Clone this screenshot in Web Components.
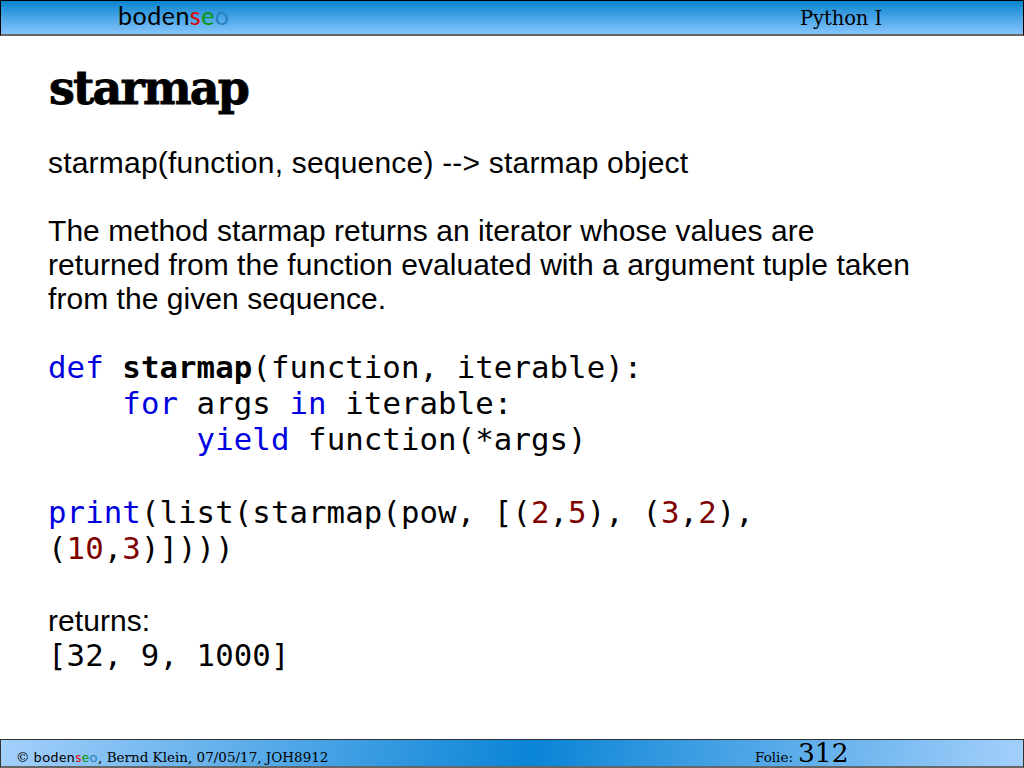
<!DOCTYPE html>
<html>
<head>
<meta charset="utf-8">
<title>starmap</title>
<style>
  html, body { margin: 0; padding: 0; background: #fff; }
  body { width: 1024px; height: 768px; overflow: hidden; display: flex; flex-direction: column; font-family: "Liberation Sans", sans-serif; }
</style>
</head>
<body>
<slide-header>Python I</slide-header>
<slide-main>
  <slide-title>starmap</slide-title>
  <slide-text style="--ls:.2px">starmap(function, sequence) --&gt; starmap object</slide-text>
  <slide-text style="--gap:34px">The method starmap returns an iterator whose values are<br>returned from the function evaluated with a argument tuple taken<br>from the given sequence.</slide-text>
  <code-block style="--gap:33px" lines="&lt;k&gt;def&lt;/k&gt; &lt;b&gt;starmap&lt;/b&gt;(function, iterable):
    &lt;k&gt;for&lt;/k&gt; args &lt;k&gt;in&lt;/k&gt; iterable:
        &lt;k&gt;yield&lt;/k&gt; function(*args)

&lt;k&gt;print&lt;/k&gt;(list(starmap(pow, [(&lt;n&gt;2&lt;/n&gt;,&lt;n&gt;5&lt;/n&gt;), (&lt;n&gt;3&lt;/n&gt;,&lt;n&gt;2&lt;/n&gt;),
(&lt;n&gt;10&lt;/n&gt;,&lt;n&gt;3&lt;/n&gt;)])))"></code-block>
  <slide-text style="--gap:38px">returns:</slide-text>
  <code-block style="--gap:-1px" lines="[32, 9, 1000]"></code-block>
</slide-main>
<slide-footer page="312" meta=", Bernd Klein, 07/05/17, JOH8912"></slide-footer>

<script>
  const SERIF = '"DejaVu Serif", "Liberation Serif", serif';

  // coloured word mark used in the header and the footer
  class BrandName extends HTMLElement {
    connectedCallback() {
      if (this.shadowRoot) return;
      this.attachShadow({ mode: 'open' }).innerHTML = `<style>
          :host { display: inline; font-family: Lato, "Noto Sans", sans-serif; color: #000; }
          .s { color: #e00000; }
          .e { color: #0a960a; }
          .o { color: #2a80bd; }
        </style>boden<span class="s">s</span><span class="e">e</span><span class="o">o</span>`;
    }
  }

  class SlideHeader extends HTMLElement {
    constructor() {
      super();
      this.attachShadow({ mode: 'open' }).innerHTML = `
        <style>
          :host {
            display: flex; flex: none; box-sizing: border-box; height: 36px;
            align-items: center; justify-content: space-between;
            padding: 0 141px 0 117px;
            border: 1px solid #000; border-bottom: 2px solid #666;
            background: linear-gradient(#0a84cf, #86c5fd);
          }
          brand-name { font-size: 25px; letter-spacing: .5px; line-height: 30px; margin-bottom: 5px; }
          .title { font: 19.5px/30px ${SERIF}; letter-spacing: -.1px; color: #000; margin-top: 2px; }
        </style>
        <brand-name></brand-name>
        <span class="title"><slot></slot></span>`;
    }
  }

  class SlideFooter extends HTMLElement {
    constructor() {
      super();
      this.attachShadow({ mode: 'open' }).innerHTML = `
        <style>
          :host {
            display: flex; flex: none; box-sizing: border-box; height: 29px; margin-top: auto;
            align-items: baseline; font: 13.5px/25px ${SERIF}; color: #000;
            padding: 0 0 0 15px;
            border: 1px solid #333; border-bottom: 2px solid #666;
            background: linear-gradient(100deg, #a4d0fb 0%, #0a84d6 52%, #a4d0fb 100%);
          }
          brand-name { font-size: 14px; letter-spacing: .5px; }
          .left { flex: none; width: 739px; white-space: nowrap; }
          .page { font-size: 26.5px; margin-left: 5px; }
        </style>
        <span class="left">© <brand-name></brand-name><span id="meta"></span></span>
        <span>Folie:</span><span class="page" id="page"></span>`;
    }
    connectedCallback() {
      this.shadowRoot.getElementById('meta').textContent = this.getAttribute('meta');
      this.shadowRoot.getElementById('page').textContent = this.getAttribute('page');
    }
  }

  class SlideMain extends HTMLElement {
    constructor() {
      super();
      this.attachShadow({ mode: 'open' }).innerHTML = `
        <style>:host { display: flex; flex-direction: column; padding: 22px 48px 0; }</style>
        <slot></slot>`;
    }
  }

  class SlideTitle extends HTMLElement {
    constructor() {
      super();
      this.attachShadow({ mode: 'open' }).innerHTML = `
        <style>
          :host {
            display: block; font: bold 46px/60px ${SERIF}; color: #000; margin-bottom: 28px; padding-left: 1px;
            letter-spacing: -1.8px; -webkit-text-stroke: .8px #000;
          }
        </style>
        <slot></slot>`;
    }
  }

  class SlideText extends HTMLElement {
    constructor() {
      super();
      this.attachShadow({ mode: 'open' }).innerHTML = `
        <style>
          :host { display: block; font: 30px/34px "Liberation Sans", sans-serif; color: #000; margin-top: var(--gap, 0); letter-spacing: var(--ls, .05px); }
        </style>
        <slot></slot>`;
    }
  }

  // renders its lines attribute, tags k / b / n stand for keyword, bold name, number
  class CodeBlock extends HTMLElement {
    connectedCallback() {
      if (this.shadowRoot) return;
      const rows = this.getAttribute('lines')
        .replace(/<k>/g, '<span class="k">').replace(/<\/k>/g, '</span>')
        .replace(/<n>/g, '<span class="n">').replace(/<\/n>/g, '</span>')
        .split('\n')
        .map(line => `<div class="line">${line}</div>`)
        .join('');
      this.attachShadow({ mode: 'open' }).innerHTML = `
        <style>
          :host { display: block; margin-top: var(--gap, 0); font: 30.72px/36.2px "DejaVu Sans Mono", monospace; letter-spacing: .08px; color: #000; }
          .line { white-space: pre; min-height: 36.2px; }
          .k { color: #0000e0; }
          .n { color: #800000; }
        </style>
        ${rows}`;
    }
  }

  customElements.define('brand-name', BrandName);
  customElements.define('slide-header', SlideHeader);
  customElements.define('slide-footer', SlideFooter);
  customElements.define('slide-main', SlideMain);
  customElements.define('slide-title', SlideTitle);
  customElements.define('slide-text', SlideText);
  customElements.define('code-block', CodeBlock);
</script>
</body>
</html>
